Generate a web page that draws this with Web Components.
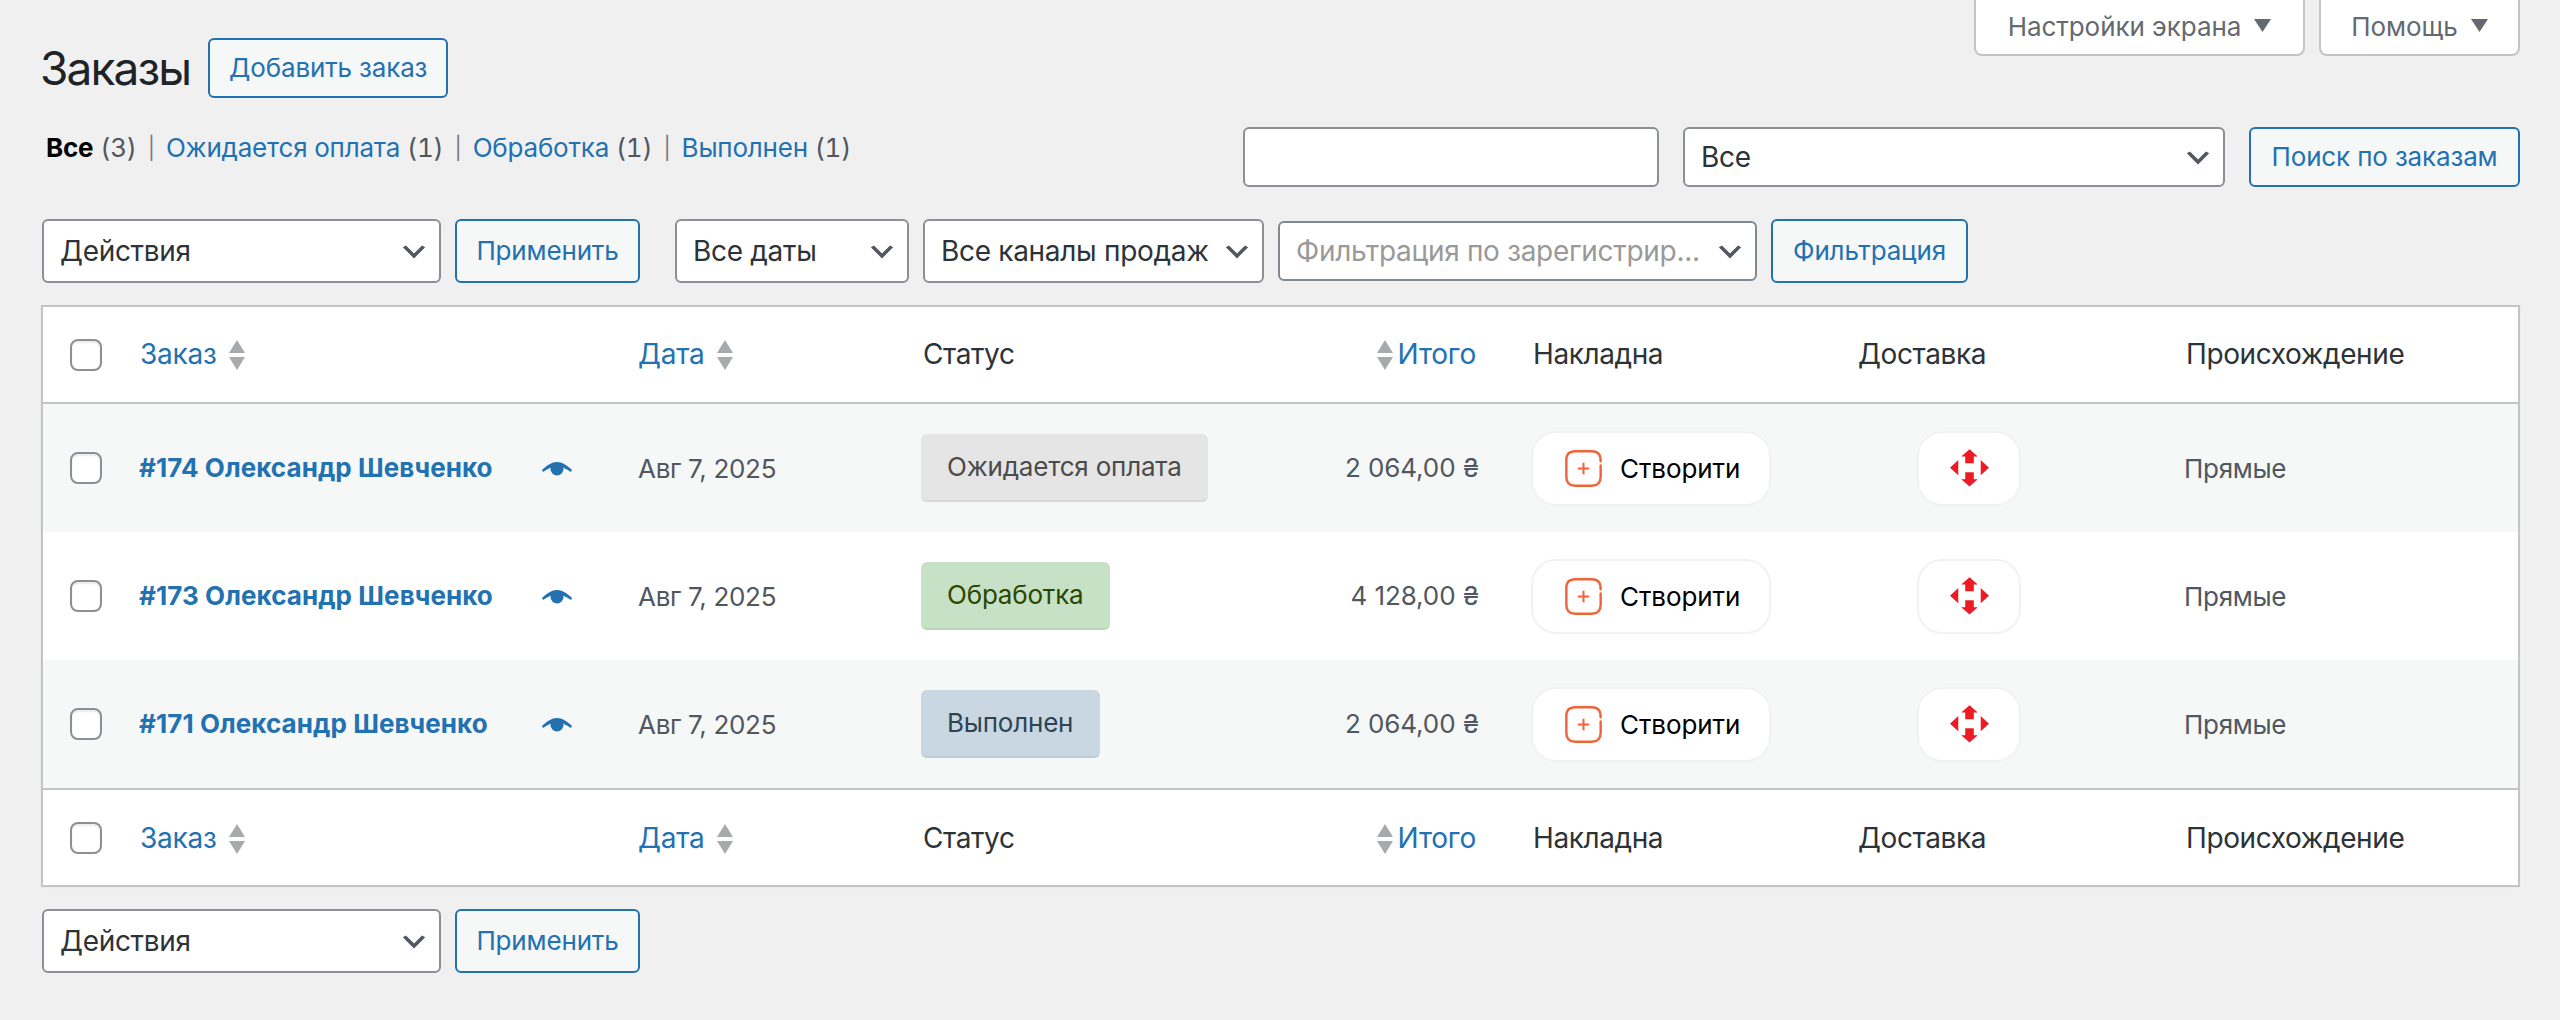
<!DOCTYPE html>
<html lang="ru">
<head>
<meta charset="utf-8">
<title>Заказы</title>
<style>
  html, body { margin: 0; background: #f0f0f1; }
  body { font: 26px/1.4 Inter, "Noto Sans", sans-serif; color: #3c434a; width: 2560px; height: 1020px; overflow: hidden; }
</style>
</head>
<body>
<orders-page></orders-page>

<script>
const CHEVRON = `<svg viewBox="0 0 20 20" width="32" height="32"><path fill="#50575e" d="M5 6l5 5 5-5 2 1-7 7-7-7 2-1z"/></svg>`;

class WpButton extends HTMLElement {
    constructor() {
        super();
        this.attachShadow({ mode: 'open' }).innerHTML = `
            <style>
                :host { display: inline-flex; align-items: center; justify-content: center; box-sizing: border-box;
                    height: 60px; border: 2px solid #2271b1; border-radius: 6px; background: #f6f7f7;
                    color: #2271b1; font-size: 26px; letter-spacing: -.15px; white-space: nowrap; }
                :host([tall]) { height: 64px; }
            </style>
            <slot></slot>`;
    }
}
customElements.define('wp-button', WpButton);

class WpSelect extends HTMLElement {
    constructor() {
        super();
        this.attachShadow({ mode: 'open' }).innerHTML = `
            <style>
                :host { display: inline-flex; align-items: center; box-sizing: border-box; height: 64px;
                    border: 2px solid #8c8f94; border-radius: 6px; background: #fff; color: #2c3338;
                    font-size: 28px; padding: 2px 40px 0 16px; position: relative; letter-spacing: -.3px; }
                :host([short]) { height: 60px; }
                :host([placeholder]) { color: #999; border-color: #7e8993; }
                .label { white-space: nowrap; overflow: hidden; }
                svg { position: absolute; right: 9px; top: 50%; margin-top: -15px; }
            </style>
            <span class="label"><slot></slot></span>${CHEVRON}`;
    }
}
customElements.define('wp-select', WpSelect);

class CheckBox extends HTMLElement {
    constructor() {
        super();
        this.attachShadow({ mode: 'open' }).innerHTML = `
            <style>
                :host { display: block; box-sizing: border-box; width: 32px; height: 32px; background: #fff;
                    border: 2px solid #8c8f94; border-radius: 8px; box-shadow: inset 0 2px 2px rgba(0,0,0,.08); }
            </style>`;
    }
}
customElements.define('check-box', CheckBox);

class SortLink extends HTMLElement {
    constructor() {
        super();
        this.attachShadow({ mode: 'open' }).innerHTML = `
            <style>
                :host { display: inline-flex; align-items: center; gap: 12px; color: #2271b1; font-size: 28px; letter-spacing: -.2px; }
                :host([before]) { flex-direction: row-reverse; gap: 5px; }
                svg { display: block; }
            </style>
            <slot></slot>
            <svg width="16" height="30" viewBox="0 0 16 30"><path fill="#a7aaad" d="M8 0l8 13H0zM0 17h16L8 30z"/></svg>`;
    }
}
customElements.define('sort-link', SortLink);

class TableHead extends HTMLElement {
    constructor() {
        super();
        this.attachShadow({ mode: 'open' }).innerHTML = `
            <style>
                :host { display: grid; grid-template-columns: var(--cols); align-items: center; height: 95px;
                    background: #fff; color: #2c3338; font-size: 28px; letter-spacing: -.4px; }
                :host(.bottom) .cell, :host(.bottom) .date, :host(.bottom) .status, :host(.bottom) .total { padding-top: 3px; }
                .check { padding-left: 27px; }
                .cell { padding-left: 17px; }
                .date { padding-left: 15px; }
                .status { padding-left: 18px; }
                .total { display: flex; justify-content: flex-end; padding-right: 41px; }
                .plain { padding-left: 16px; }
            </style>
            <div class="check"><check-box></check-box></div>
            <div class="cell"><sort-link>Заказ</sort-link></div>
            <div class="date"><sort-link>Дата</sort-link></div>
            <div class="status">Статус</div>
            <div class="total"><sort-link before>Итого</sort-link></div>
            <div class="cell plain">Накладна</div>
            <div class="cell plain">Доставка</div>
            <div class="cell plain">Происхождение</div>`;
    }
}
customElements.define('table-head', TableHead);

class StatusPill extends HTMLElement {
    constructor() {
        super();
        this.attachShadow({ mode: 'open' }).innerHTML = `
            <style>
                :host { display: inline-flex; align-items: center; box-sizing: border-box; height: 68px; padding: 0 26px;
                    border-radius: 6px; border-bottom: 2px solid rgba(0,0,0,.05); background: #e5e5e5; color: #4b4b4b;
                    font-size: 26px; letter-spacing: -.2px; white-space: nowrap; }
                :host([kind="processing"]) { background: #c6e1c6; color: #2c4700; padding-right: 27px; }
                :host([kind="completed"]) { background: #c8d7e1; color: #2e4453; padding-right: 27px; }
            </style>
            <slot></slot>`;
    }
}
customElements.define('status-pill', StatusPill);

class TtnButton extends HTMLElement {
    constructor() {
        super();
        this.attachShadow({ mode: 'open' }).innerHTML = `
            <style>
                :host { display: inline-flex; align-items: center; box-sizing: border-box; width: 240px; height: 75px;
                    padding-left: 32px; gap: 18px; background: #fff; border: 2px solid #f2f2f2; border-radius: 25px;
                    color: #000; font-size: 26px; letter-spacing: -.1px; }
                svg { display: block; flex: none; }
                span { padding-top: 2px; }
            </style>
            <svg width="37" height="37" viewBox="0 0 36 36" fill="none" stroke="#f0643c">
                <path stroke-width="2.4" stroke-linecap="round" d="M34.7 11C34.7 4 32 1.3 26 1.3H10C4 1.3 1.3 4 1.3 10V26C1.3 32 4 34.7 10 34.7H26C32 34.7 34.7 32 34.7 26V15"/>
                <path stroke-width="2" d="M18 12.5v11M12.5 18h11"/>
            </svg>
            <span>Створити</span>`;
    }
}
customElements.define('ttn-button', TtnButton);

class NpButton extends HTMLElement {
    constructor() {
        super();
        this.attachShadow({ mode: 'open' }).innerHTML = `
            <style>
                :host { display: inline-flex; align-items: center; justify-content: center; box-sizing: border-box;
                    width: 104px; height: 75px; background: #fff; border: 2px solid #f2f2f2; border-radius: 25px; }
                svg { display: block; }
            </style>
            <svg width="39" height="38" viewBox="0 0 118 114"><path fill="#ed1c24" d="M59 0L84 22H72V43H46V22H34ZM46 70H72V91H84L59 113L34 91H46ZM0 56L25 33V79ZM118 56L93 33V79Z"/></svg>`;
    }
}
customElements.define('np-button', NpButton);

class OrderRow extends HTMLElement {
    constructor() {
        super();
        this.attachShadow({ mode: 'open' });
    }

    connectedCallback() {
        const a = name => this.getAttribute(name) || '';
        this.shadowRoot.innerHTML = `
            <style>
                :host { display: grid; grid-template-columns: var(--cols); align-items: center; height: 128px;
                    background: #fff; color: #50575e; font-size: 26px; }
                :host([alt]) { background: #f6f7f7; }
                .check { padding-left: 27px; }
                .order { display: flex; align-items: center; justify-content: space-between; padding: 0 51px 0 16px; }
                .order b { color: #2271b1; font-weight: 700; letter-spacing: .07px; }
                .order svg { display: block; margin-top: 2px; }
                .date { padding: 2px 0 0 15px; letter-spacing: -.3px; }
                .status { padding-left: 16px; }
                .total { text-align: right; padding-right: 38px; letter-spacing: -.1px; }
                .ttn { padding-left: 14px; display: flex; }
                .np { padding-left: 75px; display: flex; }
                .origin { padding: 2px 0 0 14px; letter-spacing: -.3px; }
            </style>
            <div class="check"><check-box></check-box></div>
            <div class="order">
                <b>#${a('number')} ${a('name')}</b>
                <svg width="30" height="14" viewBox="0 0 30 14"><path fill="#2271b1" d="M0 8C5 3 10 0 15 0s10 3 15 8l-1 2C24 6.500 20 4.500 15 4.500S6 6.500 1 10z"/><circle fill="#2271b1" cx="15" cy="7" r="6.500"/></svg>
            </div>
            <div class="date">${a('date')}</div>
            <div class="status"><status-pill kind="${a('kind')}">${a('status')}</status-pill></div>
            <div class="total">${a('total')}</div>
            <div class="ttn"><ttn-button></ttn-button></div>
            <div class="np"><np-button></np-button></div>
            <div class="origin">Прямые</div>`;
    }
}
customElements.define('order-row', OrderRow);

class OrdersTable extends HTMLElement {
    constructor() {
        super();
        this.attachShadow({ mode: 'open' }).innerHTML = `
            <style>
                :host { display: block; border: 2px solid #c3c4c7; background: #fff; box-shadow: 0 1px 2px rgba(0,0,0,.04);
                    --cols: 80px 500px 282px 330px 282px 325px 328px 1fr; }
                table-head.top { border-bottom: 2px solid #c3c4c7; }
                table-head.bottom { border-top: 2px solid #c3c4c7; }
            </style>
            <table-head class="top"></table-head>
            <order-row alt number="174" name="Олександр Шевченко" date="Авг 7, 2025" status="Ожидается оплата" total="2 064,00 ₴"></order-row>
            <order-row number="173" name="Олександр Шевченко" date="Авг 7, 2025" kind="processing" status="Обработка" total="4 128,00 ₴"></order-row>
            <order-row alt number="171" name="Олександр Шевченко" date="Авг 7, 2025" kind="completed" status="Выполнен" total="2 064,00 ₴"></order-row>
            <table-head class="bottom"></table-head>`;
    }
}
customElements.define('orders-table', OrdersTable);

class ScreenTab extends HTMLElement {
    constructor() {
        super();
        this.attachShadow({ mode: 'open' }).innerHTML = `
            <style>
                :host { display: inline-flex; align-items: center; justify-content: center; gap: 13px; box-sizing: border-box;
                    height: 56px; background: #fff; border: 2px solid #c3c4c7; border-top: 0;
                    border-radius: 0 0 8px 8px; color: #646970; font-size: 26px; letter-spacing: -.05px; }
                svg { display: block; margin-top: -4px; }
            </style>
            <slot></slot>
            <svg width="17" height="13" viewBox="0 0 17 13"><path fill="#646970" d="M0 0h17L8.500 13z"/></svg>`;
    }
}
customElements.define('screen-tab', ScreenTab);

class StatusTabs extends HTMLElement {
    constructor() {
        super();
        this.attachShadow({ mode: 'open' }).innerHTML = `
            <style>
                :host { display: flex; align-items: center; gap: 11px; height: 40px; font-size: 26px; color: #50575e;
                    white-space: nowrap; letter-spacing: -.2px; font-variant-numeric: tabular-nums; }
                a { color: #2271b1; text-decoration: none; }
                b { color: #000; font-weight: 700; }
                i { font-style: normal; color: #787c82; font-size: 22px; }
            </style>
            <span><b>Все</b> (3)</span><i>|</i>
            <span><a>Ожидается оплата</a> (1)</span><i>|</i>
            <span><a>Обработка</a> (1)</span><i>|</i>
            <span><a>Выполнен</a> (1)</span>`;
    }
}
customElements.define('status-tabs', StatusTabs);

class OrdersPage extends HTMLElement {
    constructor() {
        super();
        this.attachShadow({ mode: 'open' }).innerHTML = `
            <style>
                :host { display: block; padding: 0 40px 0 41px; }
                .top { display: flex; justify-content: space-between; height: 97px; }
                .title { display: flex; align-items: center; gap: 18px; margin-top: 38px; height: 60px; }
                h1 { margin: 0 0 0 -1px; font-size: 46px; font-weight: 400; color: #1d2327; line-height: 60px; letter-spacing: -1.9px; }
                .meta { display: flex; gap: 14px; }
                .search { display: flex; justify-content: space-between; margin-top: 30px; height: 60px; }
                .search-box { display: flex; gap: 24px; }
                .input { box-sizing: border-box; width: 416px; height: 60px; background: #fff; border: 2px solid #8c8f94; border-radius: 6px; }
                status-tabs { margin: 1px 0 0 5px; }
                .bar { display: flex; align-items: center; gap: 14px; margin-top: 32px; height: 64px; padding-left: 1px; }
                .bar .wide { margin-left: 21px; }
                orders-table { margin-top: 22px; }
                .bar.bottom { margin-top: 22px; }
            </style>
            <div class="top">
                <div class="title">
                    <h1>Заказы</h1>
                    <wp-button style="width:240px">Добавить заказ</wp-button>
                </div>
                <div class="meta">
                    <screen-tab style="width:331px">Настройки экрана</screen-tab>
                    <screen-tab style="width:201px">Помощь</screen-tab>
                </div>
            </div>
            <div class="search">
                <status-tabs></status-tabs>
                <div class="search-box">
                    <div class="input"></div>
                    <wp-select short style="width:542px">Все</wp-select>
                    <wp-button style="width:271px">Поиск по заказам</wp-button>
                </div>
            </div>
            <div class="bar">
                <wp-select style="width:399px">Действия</wp-select>
                <wp-button tall style="width:185px">Применить</wp-button>
                <wp-select class="wide" style="width:234px">Все даты</wp-select>
                <wp-select style="width:341px">Все каналы продаж</wp-select>
                <wp-select short placeholder style="width:479px">Фильтрация по зарегистрир...</wp-select>
                <wp-button tall style="width:197px">Фильтрация</wp-button>
            </div>
            <orders-table></orders-table>
            <div class="bar bottom">
                <wp-select style="width:399px">Действия</wp-select>
                <wp-button tall style="width:185px">Применить</wp-button>
            </div>`;
    }
}
customElements.define('orders-page', OrdersPage);
</script>
</body>
</html>
